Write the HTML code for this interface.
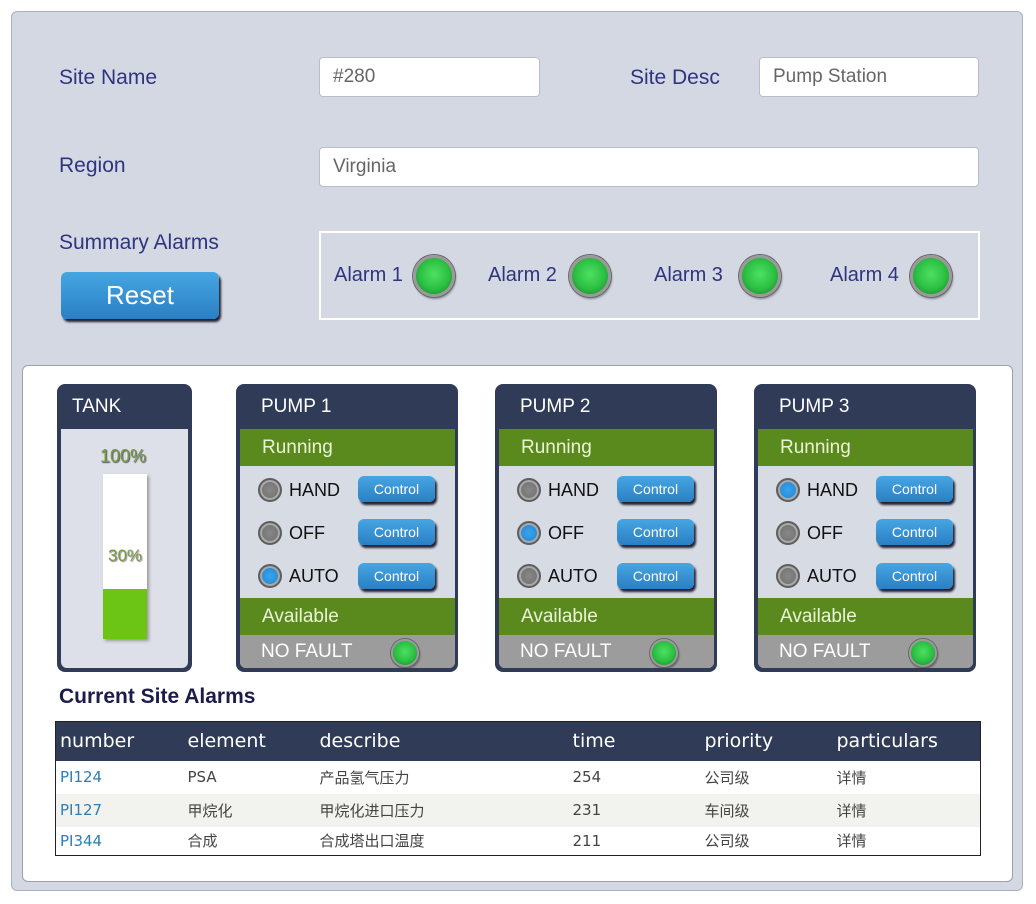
<!DOCTYPE html>
<html><head><meta charset="utf-8"><style>
*{box-sizing:border-box;margin:0;padding:0}
body{width:1036px;height:904px;background:#fff;font-family:"Liberation Sans","Noto Sans CJK SC",sans-serif;position:relative;overflow:hidden}
.a{position:absolute}
.outer{left:11px;top:11px;width:1012px;height:880px;background:#d3d8e3;border:1px solid #aab0bd;border-radius:6px}
.lbl{color:#2e3580;font-size:21px}
.inp{background:#fff;border:1px solid #b8bdc9;border-radius:4px;font-size:19px;color:#666;padding-left:13px;line-height:38px;height:40px}
.inner{left:22px;top:365px;width:991px;height:517px;background:#fff;border:1px solid #9aa0ac;border-radius:6px}
.led{border-radius:50%;background:radial-gradient(circle at 50% 45%,#4de063 0,#2cc043 55%,#1e9a32 80%);border:3px solid #9a9a9a;box-shadow:0 0 0 1px #666,1px 2px 2px rgba(0,0,0,.4)}
.btn{background:linear-gradient(#46a6e2,#2a7fc4);border-radius:6px;color:#fff;text-align:center;box-shadow:2px 3px 2px #223}
.panel{background:#2f3b57;border-radius:8px}
.hd{color:#fff;font-size:19px}
.bar{background:#5a8a1e;color:#eaf5d4;font-size:19px;padding-left:22px;line-height:37px}
.rad{width:24px;height:24px;border-radius:50%;background:radial-gradient(#888,#6a6a6a);border:2px solid #5e5e5e;box-shadow:inset 0 0 0 2px #aaa}
.rad.on{background:radial-gradient(#3aa3ee,#1e7fcc)}
.mode{font-size:18px;color:#111}
th,td{text-align:left;font-weight:normal}
</style></head><body>
<div class="a outer"></div>
<div class="a lbl" style="left:59px;top:66px">Site Name</div>
<div class="a inp" style="left:319px;top:57px;width:221px">#280</div>
<div class="a lbl" style="left:630px;top:66px">Site Desc</div>
<div class="a inp" style="left:759px;top:57px;width:220px">Pump Station</div>
<div class="a lbl" style="left:59px;top:154px">Region</div>
<div class="a inp" style="left:319px;top:147px;width:660px">Virginia</div>
<div class="a lbl" style="left:59px;top:231px">Summary Alarms</div>
<div class="a btn" style="left:61px;top:272px;width:158px;height:47px;font-size:26px;line-height:47px">Reset</div>
<div class="a" style="left:319px;top:231px;width:661px;height:89px;border:2px solid #fff"></div>
<div class="a lbl" style="left:334px;top:264px;font-size:20px">Alarm 1</div><div class="a led" style="left:413px;top:255px;width:42px;height:42px"></div>
<div class="a lbl" style="left:488px;top:264px;font-size:20px">Alarm 2</div><div class="a led" style="left:569px;top:255px;width:42px;height:42px"></div>
<div class="a lbl" style="left:654px;top:264px;font-size:20px">Alarm 3</div><div class="a led" style="left:739px;top:255px;width:42px;height:42px"></div>
<div class="a lbl" style="left:830px;top:264px;font-size:20px">Alarm 4</div><div class="a led" style="left:910px;top:255px;width:42px;height:42px"></div>
<div class="a inner"></div>
<!-- tank -->
<div class="a panel" style="left:57px;top:384px;width:135px;height:288px"></div>
<div class="a hd" style="left:72px;top:396px">TANK</div>
<div class="a" style="left:61px;top:429px;width:127px;height:239px;background:#dde0e8;border-radius:0 0 6px 6px"></div>
<div class="a" style="left:100px;top:446px;font-size:18px;color:#7b9a3c;text-shadow:1px 1px 1px #556">100%</div>
<div class="a" style="left:103px;top:474px;width:44px;height:165px;background:#fff;box-shadow:2px 2px 3px #999"></div>
<div class="a" style="left:103px;top:589px;width:44px;height:50px;background:#6cc414"></div>
<div class="a" style="left:108px;top:546px;font-size:17px;color:#7b9a3c;text-shadow:1px 1px 1px #889">30%</div>
<!-- pump 1 -->
<div class="a panel" style="left:236px;top:384px;width:222px;height:288px"></div>
<div class="a hd" style="left:261px;top:396px">PUMP 1</div>
<div class="a" style="left:240px;top:429px;width:215px;height:239px;background:#d7dbe4;border-radius:0 0 6px 6px;overflow:hidden">
<div class="bar">Running</div>
<div class="a rad" style="left:18px;top:49px"></div><div class="a mode" style="left:49px;top:51px">HAND</div><div class="a btn" style="left:118px;top:47px;width:77px;height:26px;font-size:14px;line-height:26px">Control</div>
<div class="a rad" style="left:18px;top:92px"></div><div class="a mode" style="left:49px;top:94px">OFF</div><div class="a btn" style="left:118px;top:90px;width:77px;height:26px;font-size:14px;line-height:26px">Control</div>
<div class="a rad on" style="left:18px;top:135px"></div><div class="a mode" style="left:49px;top:137px">AUTO</div><div class="a btn" style="left:118px;top:134px;width:77px;height:26px;font-size:14px;line-height:26px">Control</div>
<div class="a bar" style="left:0;top:169px;width:215px">Available</div>
<div class="a" style="left:0;top:206px;width:215px;height:33px;background:#9c9c9c;color:#fff;font-size:19px;padding-left:21px;line-height:33px">NO FAULT</div>
<div class="a led" style="left:151px;top:210px;width:28px;height:28px;border-width:2px"></div>
</div>
<!-- pump 2 -->
<div class="a panel" style="left:495px;top:384px;width:222px;height:288px"></div>
<div class="a hd" style="left:520px;top:396px">PUMP 2</div>
<div class="a" style="left:499px;top:429px;width:215px;height:239px;background:#d7dbe4;border-radius:0 0 6px 6px;overflow:hidden">
<div class="bar">Running</div>
<div class="a rad" style="left:18px;top:49px"></div><div class="a mode" style="left:49px;top:51px">HAND</div><div class="a btn" style="left:118px;top:47px;width:77px;height:26px;font-size:14px;line-height:26px">Control</div>
<div class="a rad on" style="left:18px;top:92px"></div><div class="a mode" style="left:49px;top:94px">OFF</div><div class="a btn" style="left:118px;top:90px;width:77px;height:26px;font-size:14px;line-height:26px">Control</div>
<div class="a rad" style="left:18px;top:135px"></div><div class="a mode" style="left:49px;top:137px">AUTO</div><div class="a btn" style="left:118px;top:134px;width:77px;height:26px;font-size:14px;line-height:26px">Control</div>
<div class="a bar" style="left:0;top:169px;width:215px">Available</div>
<div class="a" style="left:0;top:206px;width:215px;height:33px;background:#9c9c9c;color:#fff;font-size:19px;padding-left:21px;line-height:33px">NO FAULT</div>
<div class="a led" style="left:151px;top:210px;width:28px;height:28px;border-width:2px"></div>
</div>
<!-- pump 3 -->
<div class="a panel" style="left:754px;top:384px;width:222px;height:288px"></div>
<div class="a hd" style="left:779px;top:396px">PUMP 3</div>
<div class="a" style="left:758px;top:429px;width:215px;height:239px;background:#d7dbe4;border-radius:0 0 6px 6px;overflow:hidden">
<div class="bar">Running</div>
<div class="a rad on" style="left:18px;top:49px"></div><div class="a mode" style="left:49px;top:51px">HAND</div><div class="a btn" style="left:118px;top:47px;width:77px;height:26px;font-size:14px;line-height:26px">Control</div>
<div class="a rad" style="left:18px;top:92px"></div><div class="a mode" style="left:49px;top:94px">OFF</div><div class="a btn" style="left:118px;top:90px;width:77px;height:26px;font-size:14px;line-height:26px">Control</div>
<div class="a rad" style="left:18px;top:135px"></div><div class="a mode" style="left:49px;top:137px">AUTO</div><div class="a btn" style="left:118px;top:134px;width:77px;height:26px;font-size:14px;line-height:26px">Control</div>
<div class="a bar" style="left:0;top:169px;width:215px">Available</div>
<div class="a" style="left:0;top:206px;width:215px;height:33px;background:#9c9c9c;color:#fff;font-size:19px;padding-left:21px;line-height:33px">NO FAULT</div>
<div class="a led" style="left:151px;top:210px;width:28px;height:28px;border-width:2px"></div>
</div>
<div class="a" style="left:59px;top:685px;font-size:21px;font-weight:bold;color:#1c1c4a">Current Site Alarms</div>
<table class="a" style="left:55px;top:721px;width:926px;border-collapse:collapse;border:1px solid #222;font-family:'DejaVu Sans','Noto Sans CJK SC',sans-serif">
<tr style="background:#2f3b57;color:#fff;height:39px;font-size:19px"><th style="padding-left:4px;width:132px">number</th><th style="width:132px">element</th><th style="width:253px">describe</th><th style="width:132px">time</th><th style="width:132px">priority</th><th>particulars</th></tr>
<tr style="height:33px;font-size:15px;color:#444"><td style="padding-left:4px;color:#2a7fb8">PI124</td><td>PSA</td><td>产品氢气压力</td><td>254</td><td>公司级</td><td>详情</td></tr>
<tr style="height:33px;font-size:15px;color:#444;background:#f2f2ee"><td style="padding-left:4px;color:#2a7fb8">PI127</td><td>甲烷化</td><td>甲烷化进口压力</td><td>231</td><td>车间级</td><td>详情</td></tr>
<tr style="height:29px;font-size:15px;color:#444"><td style="padding-left:4px;color:#2a7fb8">PI344</td><td>合成</td><td>合成塔出口温度</td><td>211</td><td>公司级</td><td>详情</td></tr>
</table>
</body></html>
